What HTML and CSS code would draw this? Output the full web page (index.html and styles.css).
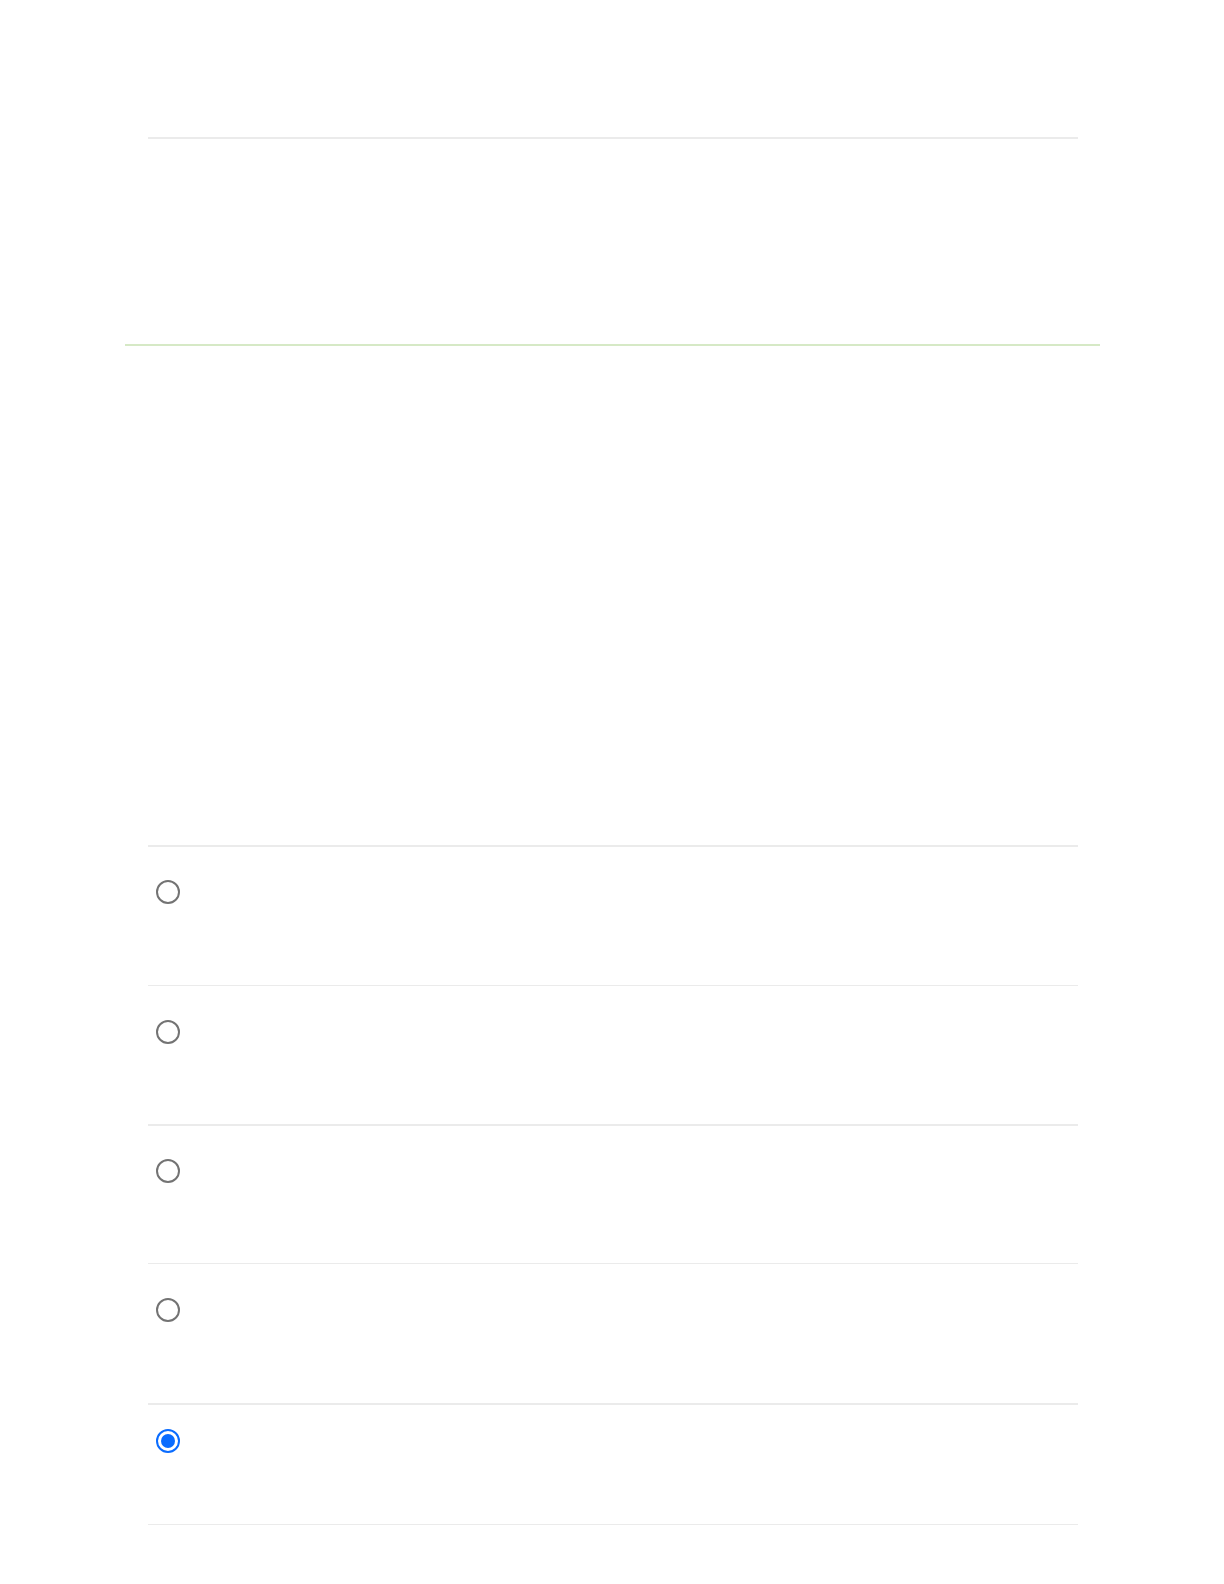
FILE: index.html
```html
<!DOCTYPE html>
<html lang="en">
  <head>
    <meta charset="UTF-8" />
    <meta name="viewport" content="width=device-width, initial-scale=1.0" />
    <title>Choices</title>
    <link rel="stylesheet" href="styles.css">
  </head>
  <body>
    <div class="huudas">
      <div class="deed-heseg">
        <div class="shugam"></div>
      </div>

      <div class="nogoon-shugam"></div>

      <div class="songolt-jagsaalt">
        <label class="songolt row-1">
          <span class="radio"></span>
        </label>
        <label class="songolt row-2">
          <span class="radio"></span>
        </label>
        <label class="songolt row-3">
          <span class="radio"></span>
        </label>
        <label class="songolt row-4">
          <span class="radio"></span>
        </label>
        <label class="songolt songolt-suul">
          <span class="radio songogdson"></span>
        </label>
      </div>
    </div>
  </body>
</html>
```

FILE: styles.css
```css
body {
  margin: 0;
  background-color: #ffffff;
  font-family: "Liberation Sans", Arial, sans-serif;
}

.huudas {
  width: 1224px;
  height: 1584px;
}

.deed-heseg {
  padding-top: 137px;
  padding-left: 148px;
}

.shugam {
  width: 930px;
  height: 2px;
  background-color: #ebebeb;
}

.nogoon-shugam {
  width: 975px;
  height: 2px;
  margin-top: 205px;
  margin-left: 125px;
  background-color: #d6e9c6;
}

.songolt-jagsaalt {
  margin-top: 499px;
  margin-left: 148px;
  width: 930px;
  border-bottom: 1px solid #ebebeb;
}

.songolt {
  display: block;
  box-sizing: border-box;
  height: 140px;
  padding-top: 34px;
  padding-left: 8px;
  border-top: 1px solid #ebebeb;
}

.row-1,
.row-3 {
  border-top-width: 2px;
  padding-top: 33px;
}

.row-2,
.row-3 {
  height: 139px;
}

.songolt-suul {
  height: 121px;
  padding-top: 24px;
  border-top-width: 2px;
}

.radio {
  display: block;
  box-sizing: border-box;
  width: 24px;
  height: 24px;
  border: 2px solid #737373;
  border-radius: 50%;
  background-color: #ffffff;
}

.radio.songogdson {
  border: 2px solid #0a6cff;
  padding: 3px;
}

.radio.songogdson::after {
  content: "";
  display: block;
  width: 14px;
  height: 14px;
  border-radius: 50%;
  background-color: #0a6cff;
}
```
